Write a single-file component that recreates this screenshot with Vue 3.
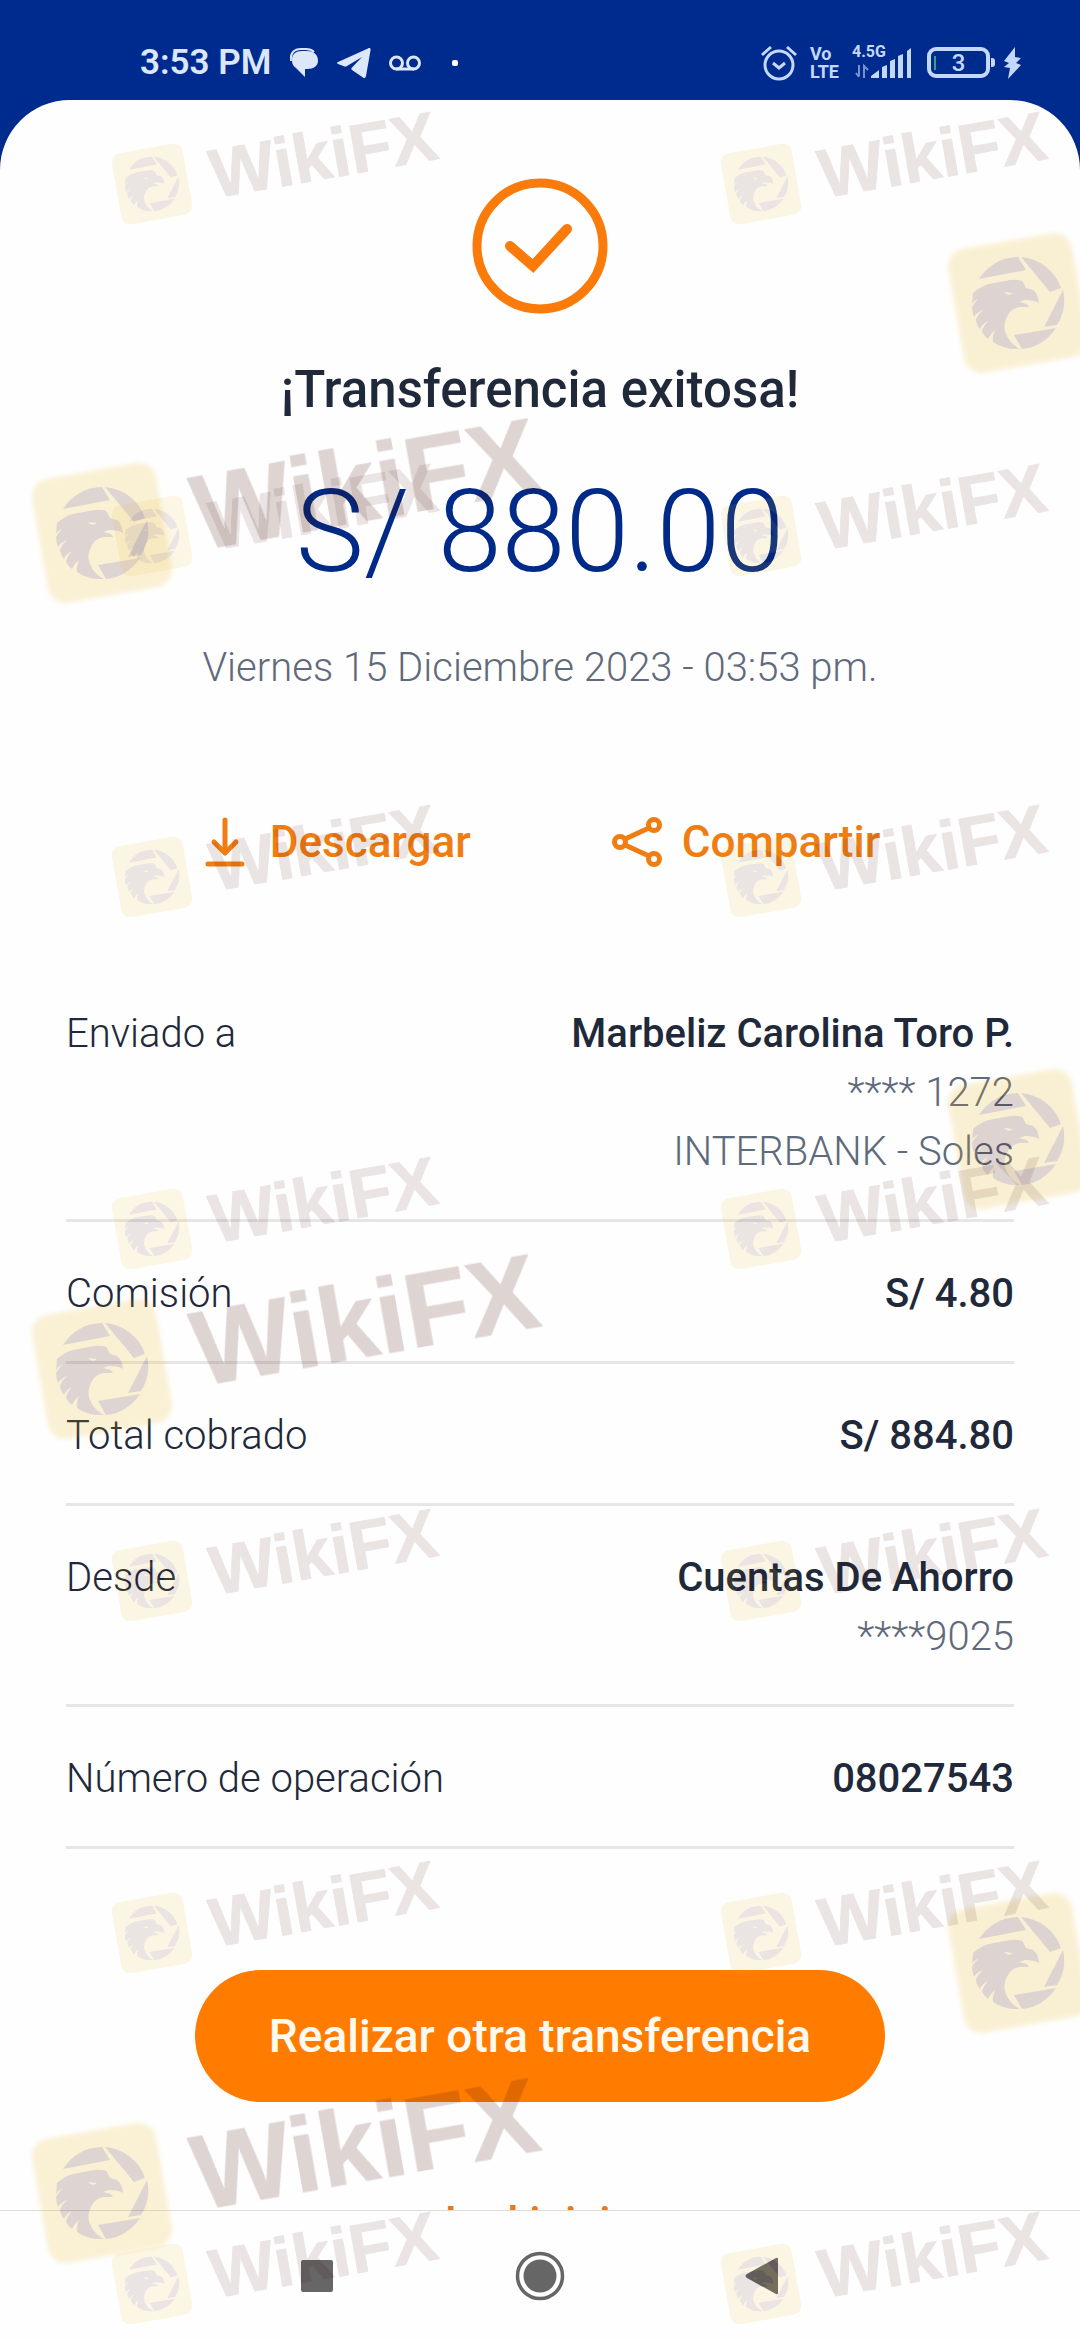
<script setup>
const details = [
  { label: 'Enviado a', value: 'Marbeliz Carolina Toro P.', notes: ['**** 1272', 'INTERBANK - Soles'] },
  { label: 'Comisión', value: 'S/ 4.80', notes: [] },
  { label: 'Total cobrado', value: 'S/ 884.80', notes: [] },
  { label: 'Desde', value: 'Cuentas De Ahorro', notes: ['****9025'] },
  { label: 'Número de operación', value: '08027543', notes: [] },
]

const smallRows = [184, 536, 877, 1229, 1581, 1933, 2284]
const smallMarks = smallRows.flatMap((y) => [{ x: 152, y }, { x: 761, y }])
const largeMarks = [
  { x: 102, y: 533, named: true },
  { x: 1018, y: 303, named: false },
  { x: 102, y: 1369, named: true },
  { x: 1018, y: 1139, named: false },
  { x: 102, y: 2193, named: true },
  { x: 1018, y: 1963, named: false },
]
</script>

<template>
  <div class="screen">
    <header class="status">
      <div class="status-left">
        <span class="time">3:53 PM</span>
        <svg class="chat" width="28" height="29" viewBox="0 0 28 29" aria-hidden="true">
          <path d="M1 13C0 5 4 1 11 1h5c4 0 6 1 8 3" fill="none" stroke="currentColor" stroke-width="2" />
          <path d="M12 3h5c7 0 11 4 11 9.500S24 21 17 21h-2v8l-9-9c-3-2-4-4-4-8 0-6 4-9 10-9z" />
        </svg>
        <svg class="plane" width="34" height="30" viewBox="0 0 34 30" aria-hidden="true">
          <path d="M1 14 31 .4c2-.9 2.800-.2 2.500 2L29 28c-.3 2-1.500 2.400-3 1.400L15 22c-1-.8-1-1.500 0-2.500L25 9 10 18c-1 .6-2 .6-3 .3L1 16c-1.300-.5-1.300-1.300 0-2z" />
        </svg>
        <svg class="voicemail" width="32" height="16" viewBox="0 0 32 16" fill="none" stroke="currentColor" stroke-width="3" aria-hidden="true">
          <circle cx="7.500" cy="8" r="6" />
          <circle cx="24.500" cy="8" r="6" />
          <path d="M7 14h18" />
        </svg>
        <span class="dot"></span>
      </div>
      <div class="status-right">
        <svg width="36" height="36" viewBox="0 0 36 36" fill="none" stroke="currentColor" stroke-width="3" aria-hidden="true">
          <circle cx="18" cy="20" r="14" />
          <path d="m12 18 6 5 6-5M1 10l9-8M35 10l-9-8" />
        </svg>
        <span class="volte"><span>Vo</span><span>LTE</span></span>
        <span class="signal">
          <span class="generation">4.5G</span>
          <svg width="60" height="34" viewBox="0 0 60 34" aria-hidden="true">
            <path d="M7 19v11M4 27l3 4M12 32V20l4 4" fill="none" stroke="currentColor" stroke-width="2" opacity=".6" />
            <path d="M19 32v-2l8-6v8zM30 32V21l5-2v13zM38 32V15l5-2v19zM46 32V10l5-2v24zM55 32V5l4-3v30z" />
          </svg>
        </span>
        <svg class="battery" width="70" height="32" viewBox="0 0 70 32" aria-hidden="true">
          <rect x="2" y="2" width="59" height="27" rx="7" fill="none" stroke="currentColor" stroke-width="4" />
          <path d="M64 11h1q3 0 3 3v3q0 3-3 3h-1z" />
          <path d="M8 9v14" stroke="#3b9c8e" stroke-width="2" />
          <text x="31.500" y="24" text-anchor="middle">3</text>
        </svg>
        <svg class="bolt" width="19" height="32" viewBox="0 0 19 32" aria-hidden="true">
          <path d="M12 0 1 14l5 2-5 4 6 1-2 11L18 18l-5-2 5-5-6-1z" />
        </svg>
      </div>
    </header>

    <main class="sheet">
      <svg class="success" viewBox="0 0 136 136" fill="none" stroke="currentColor" role="img" aria-label="Operación exitosa">
        <circle cx="68" cy="68" r="63" stroke-width="9" />
        <path d="m38 68 23 20 34-37" stroke-width="10" stroke-linecap="round" />
      </svg>
      <h1>¡Transferencia exitosa!</h1>
      <p class="amount">S/ 880.00</p>
      <p class="date">Viernes 15 Diciembre 2023 - 03:53 pm.</p>

      <div class="actions">
        <button type="button" class="action">
          <svg width="50" height="50" viewBox="0 0 50 50" fill="none" stroke="currentColor" stroke-width="5" stroke-linecap="round" stroke-linejoin="round" aria-hidden="true">
            <path d="M25 3v32M14 25l11 11 11-11M8 47h34" />
          </svg>
          Descargar
        </button>
        <button type="button" class="action">
          <svg width="50" height="50" viewBox="0 0 50 50" fill="none" stroke="currentColor" stroke-width="5" aria-hidden="true">
            <circle cx="8" cy="25" r="5.500" />
            <circle cx="42" cy="8" r="5.500" />
            <circle cx="42" cy="42" r="5.500" />
            <path d="m13 22 24-11M13 28l24 11" />
          </svg>
          Compartir
        </button>
      </div>

      <dl class="details">
        <div v-for="row in details" :key="row.label" class="row">
          <dt>{{ row.label }}</dt>
          <dd>
            <strong>{{ row.value }}</strong>
            <span v-for="note in row.notes" :key="note">{{ note }}</span>
          </dd>
        </div>
      </dl>

      <button type="button" class="primary">Realizar otra transferencia</button>
      <a class="home-link" href="#">Ir al inicio</a>
    </main>

    <nav class="system-nav" aria-label="Sistema">
      <button type="button" aria-label="Recientes">
        <svg width="50" height="50" viewBox="0 0 50 50"><rect x="8" y="9" width="32" height="32" rx="2" /></svg>
      </button>
      <button type="button" aria-label="Inicio">
        <svg width="50" height="50" viewBox="0 0 50 50">
          <circle cx="25" cy="25" r="22.500" fill="none" stroke="currentColor" stroke-width="3.500" />
          <circle cx="25" cy="25" r="16.500" />
        </svg>
      </button>
      <button type="button" aria-label="Atrás">
        <svg width="50" height="50" viewBox="0 0 50 50"><path d="M41 8v34q0 2-2 1L10 27q-3-2 0-4L39 7q2-1 2 1z" /></svg>
      </button>
    </nav>

    <svg class="watermarks" aria-hidden="true">
      <defs>
        <g id="eagle-disc">
          <path d="M-39-24A46 46 0 0 1 0-46L8-33z" />
          <path d="M3-46A46 46 0 0 1 43-15L32-11z" />
          <path d="M45-13A46 46 0 0 1 39 22L26 24z" />
          <path d="M38 25-4 32 4 46A46 46 0 0 0 38 25z" />
          <path
            fill-rule="evenodd"
            d="M-45-10Q-37-17-29-19L-8-23Q3-24 5-21L8-15 15-13Q20-10 21 0 17-3 7-3L1-1 9 1 11 4 1 4Q-7 6-10 12-16 22-12 31-8 41 2 46-14 47-25 39-26 34-23 27-28 31-30 36-35 32-36 28-34 22-30 18-36 21-38 26-42 21-42 16-40 11-35 7-42 10-44 14-46 8-46 4-44 0-40-4-44-3-46 1zM-14-11-5-10Q-10-6-14-11z"
          />
        </g>
        <filter id="soft" x="-10%" y="-10%" width="120%" height="120%">
          <feGaussianBlur stdDeviation="2" />
        </filter>
      </defs>
      <g v-for="mark in largeMarks" :key="`l${mark.x}-${mark.y}`" class="mark large" :transform="`translate(${mark.x} ${mark.y})`">
        <rect class="tile" x="-63" y="-63" width="126" height="126" rx="18" transform="rotate(-10)" filter="url(#soft)" />
        <use href="#eagle-disc" />
        <text v-if="mark.named" x="93" y="34" transform="rotate(-10)">WikiFX</text>
      </g>
      <g v-for="mark in smallMarks" :key="`s${mark.x}-${mark.y}`" class="mark small" :transform="`translate(${mark.x} ${mark.y})`">
        <rect class="tile" x="-36" y="-36" width="72" height="72" rx="9" transform="rotate(-10)" />
        <use href="#eagle-disc" transform="scale(.59)" />
        <text x="59" y="25" transform="rotate(-10)">WikiFX</text>
      </g>
    </svg>
  </div>
</template>

<style>
body {
  margin: 0;
}
</style>

<style scoped>
.screen {
  position: relative;
  display: flex;
  flex-direction: column;
  height: 100vh;
  overflow: hidden;
  background: #002b8e;
  color: #1f293a;
  font-family: Roboto, "Liberation Sans", sans-serif;
}

.status {
  flex: none;
  display: flex;
  align-items: center;
  justify-content: space-between;
  box-sizing: border-box;
  height: 100px;
  padding: 25px 58px 0 140px;
  color: #dce7fc;
}

.status svg {
  fill: currentColor;
}

.status svg[fill="none"] {
  fill: none;
}

.status-left,
.status-right {
  display: flex;
  align-items: center;
}

.time {
  margin-right: 19px;
  font-size: 35px;
  font-weight: 600;
}

.plane {
  margin-left: 19px;
}

.voicemail {
  margin-left: 18px;
}

.dot {
  width: 6px;
  height: 6px;
  margin-left: 31px;
  border-radius: 2px;
  background: #fff;
}

.status-right {
  color: #c5d8fb;
}

.volte {
  display: flex;
  flex-direction: column;
  margin-left: 13px;
  font-size: 18px;
  font-weight: 700;
  line-height: 18px;
}

.signal {
  position: relative;
  display: flex;
  margin-left: 13px;
}

.generation {
  position: absolute;
  top: -3px;
  left: 0;
  font-size: 16px;
  font-weight: 700;
  line-height: 18px;
}

.battery {
  margin-left: 15px;
  font-size: 24px;
  font-weight: 500;
}

.bolt {
  margin-left: 6px;
}

.sheet {
  flex: 1;
  min-height: 0;
  display: flex;
  flex-direction: column;
  align-items: center;
  overflow: hidden;
  border-radius: 70px 70px 0 0;
  background: #fefefe;
}

.sheet > * {
  flex: none;
}

.success {
  width: 136px;
  height: 136px;
  margin-top: 78px;
  color: #fa7b0a;
}

h1 {
  margin: 46px 0 0;
  font-size: 51px;
  font-weight: 500;
  line-height: 60px;
}

.amount {
  margin: 46px 0 0;
  color: #002a88;
  font-size: 115px;
  font-weight: 300;
  line-height: 132px;
}

.date {
  margin: 44px 0 0;
  color: #5f6a7b;
  font-size: 40px;
  font-weight: 300;
  line-height: 52px;
}

button {
  padding: 0;
  border: 0;
  background: none;
  color: inherit;
  font: inherit;
}

.actions {
  display: flex;
  gap: 141px;
  margin-top: 123px;
}

.action {
  display: flex;
  gap: 20px;
  color: #ef7d12;
  font-size: 44px;
  font-weight: 500;
  line-height: 50px;
}

.details {
  align-self: stretch;
  margin: 95px 66px 0;
  font-size: 40px;
  line-height: 59px;
}

.row {
  display: flex;
  justify-content: space-between;
  padding: 42px 0 38px;
  border-bottom: 3px solid #e6e6e7;
}

dt {
  font-weight: 300;
}

dd {
  display: flex;
  flex-direction: column;
  align-items: flex-end;
  margin: 0;
  color: #5f6a7b;
  font-weight: 300;
}

dd strong {
  color: #1f293a;
  font-weight: 500;
}

.primary {
  height: 132px;
  margin-top: 121px;
  padding: 0 74px;
  border-radius: 66px;
  background: #ff7c00;
  color: #fffaf0;
  font-size: 46px;
  font-weight: 500;
}

.home-link {
  margin-top: 95px;
  color: #e57a1c;
  font-size: 44px;
  font-weight: 500;
  line-height: 52px;
  text-decoration: none;
}

.system-nav {
  flex: none;
  display: flex;
  align-items: center;
  justify-content: center;
  gap: 122px;
  box-sizing: border-box;
  height: 130px;
  border-top: 1px solid #dcdcdc;
  background: #fefefe;
  color: #666;
}

.system-nav button {
  display: flex;
  justify-content: center;
  width: 100px;
}

.system-nav svg {
  fill: currentColor;
}

.watermarks {
  position: absolute;
  inset: 0;
  width: 100%;
  height: 100%;
  pointer-events: none;
}

.mark {
  fill: #410c00;
  font-family: "Liberation Sans", Arial, sans-serif;
  font-weight: 700;
}

.mark text {
  stroke: #410c00;
  stroke-width: 1px;
  stroke-linejoin: round;
}

.tile {
  fill: #e6b00c;
}

.large {
  opacity: 0.17;
  font-size: 105px;
}

.small {
  opacity: 0.1;
  font-size: 69px;
}
</style>
